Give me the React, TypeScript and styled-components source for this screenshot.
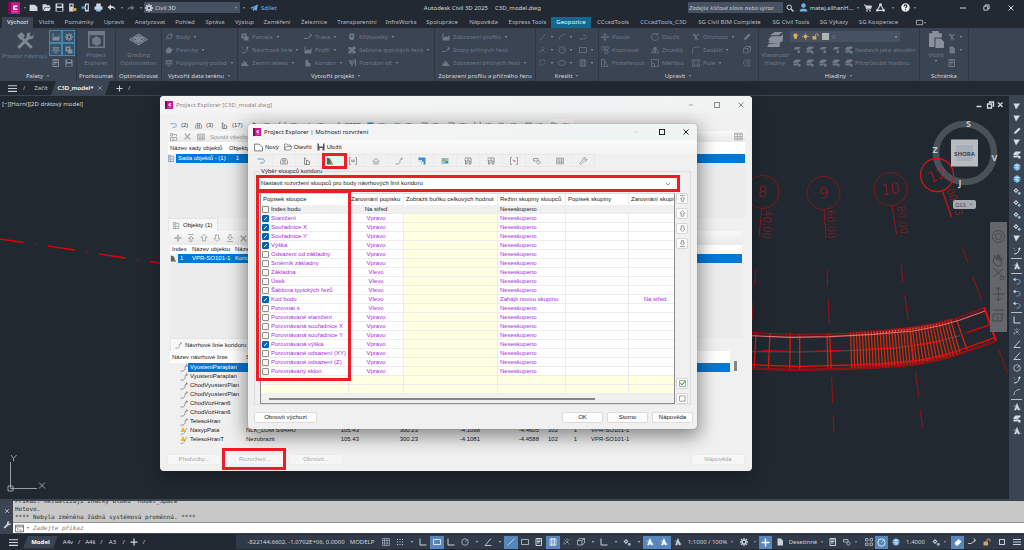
import React from "react";
import styled, { createGlobalStyle } from "styled-components";

const UI = `"Noto Sans", "Open Sans", sans-serif`;
const DLG = `"Liberation Sans", Arial, sans-serif`;
const MONO = `"DejaVu Sans Mono", "Liberation Mono", monospace`;

const Global = createGlobalStyle`
  *, *::before, *::after { box-sizing: border-box; }
  body { margin: 0; background: #222933; }
  button, input, select { font: inherit; color: inherit; border: 0; background: none; padding: 0; margin: 0; min-width: 0; border-radius: 0; }
`;

/* ---------- icons ---------- */

const SHAPES: Record<string, React.ReactNode> = {
  caret: <path d="M3 5h10l-5 6z" fill="currentColor" />,
  newdoc: <path d="M1 3h9l5 4v7H1z" fill="currentColor" />,
  open: <path d="M1 2h6l2 2h5v3H5l-3 6H1zM5.500 8H16l-3 6H2.500z" fill="currentColor" />,
  save: <path d="M1 1h13l1 1v13H1zM4 2v4h8V2zM3 9v5h10V9z" fill="currentColor" fillRule="evenodd" />,
  saveas: <><path d="M2 1h8v14H2zM4 3v3h4V3z" fill="currentColor" fillRule="evenodd" /><path d="M8 9h7v5H8z" fill="#d9a441" /></>,
  mobile: <><path d="M7 1h7v14H7zM9 3v9h3V3z" fill="currentColor" fillRule="evenodd" /><path d="M1 6h4V4l4 4-4 4v-2H1z" fill="#5aa7e0" /></>,
  print: <><path d="M4 1h8v5H4zM1 6h14v6H1z" fill="currentColor" /><path d="M4 10h8v5H4z" fill="#8fc4ee" /></>,
  undo: <path d="M7 2v3.500c5 0 8 2 8 7-2-3-4-3.500-8-3.500V13L1 7.500z" fill="currentColor" />,
  redo: <path d="M9 2v3.500c-5 0-8 2-8 7 2-3 4-3.500 8-3.500V13l6-5.500z" fill="currentColor" />,
  gear: <><circle cx="8" cy="8" r="4" fill="none" stroke="currentColor" strokeWidth="3" /><path d="M8 0v3M8 13v3M0 8h3M13 8h3M2.300 2.300l2.200 2.200M11.500 11.500l2.200 2.200M2.300 13.700l2.200-2.200M11.500 4.500l2.200-2.200" stroke="currentColor" strokeWidth="2.600" /></>,
  plane: <path d="M0 8L16 1l-3 13-4.500-3L6 15l-.5-5L13 4 4 9.500z" fill="currentColor" />,
  search: <><circle cx="6.500" cy="6.500" r="4.500" fill="none" stroke="currentColor" strokeWidth="2" /><path d="M10 10l5 5" stroke="currentColor" strokeWidth="2.500" /></>,
  person: <><circle cx="8" cy="4.500" r="4" fill="currentColor" /><path d="M1 15c0-4 3-5 7-5s7 1 7 5z" fill="currentColor" /></>,
  cart: <><path d="M0 2h3l2 8h8l2-6H4" fill="none" stroke="currentColor" strokeWidth="2" /><path d="M4 4h11l-2 5H5z" fill="currentColor" /><circle cx="6" cy="13.500" r="1.700" fill="currentColor" /><circle cx="12" cy="13.500" r="1.700" fill="currentColor" /></>,
  adesk: <><path d="M2 13L8 3l6 10M2 13h12" fill="none" stroke="currentColor" strokeWidth="2" /><circle cx="8" cy="3" r="2.500" fill="currentColor" /><circle cx="2.500" cy="13" r="2.500" fill="currentColor" /><circle cx="13.500" cy="13" r="2.500" fill="currentColor" /></>,
  help: <><circle cx="8" cy="8" r="7.500" fill="#f0f0f0" /><path d="M5.500 6c0-3.500 5-3.500 5-.5 0 2-2.500 2-2.500 4M8 11v2" fill="none" stroke="#222933" strokeWidth="2" /></>,
  min: <path d="M2 8h12" stroke="currentColor" strokeWidth="2" />,
  max: <rect x="3" y="3" width="10" height="10" fill="none" stroke="currentColor" strokeWidth="2" />,
  restore: <path d="M2 5h9v9H2zM5 5V2h9v9h-3" fill="none" stroke="currentColor" strokeWidth="2" />,
  close: <path d="M3 3l10 10M13 3L3 13" stroke="currentColor" strokeWidth="2" />,
  burger: <path d="M0 3h16M0 8h16M0 13h16" stroke="currentColor" strokeWidth="2" />,
  plus: <path d="M8 1v14M1 8h14" stroke="currentColor" strokeWidth="2.500" />,
  plusfat: <path d="M8 1v14M1 8h14" stroke="currentColor" strokeWidth="4" />,
  tools: <><path d="M2 15L11 6M14 15L5 6" stroke="currentColor" strokeWidth="2.600" /><path d="M1 4l4-3 3 3-4 4zM10 2l3-1-1 3 2 1 2-2c0 4-3 5-5 4S9 4 10 2z" fill="currentColor" /></>,
  explorer: <path d="M0 0h16v16H0zM1.500 4v10.500h13V4zM8 5l4 2v5l-4 2-4-2V7z" fill="currentColor" fillRule="evenodd" />,
  grading: <><path d="M0 8l8-5 8 5-8 5z" fill="none" stroke="currentColor" strokeWidth="1" /><path d="M3 8l5-3 5 3-5 3zM4 5.500l8 5M12 5.500l-8 5" fill="none" stroke="currentColor" strokeWidth="1.200" /><circle cx="8" cy="8" r="2.500" fill="currentColor" /></>,
  point: <><path d="M8 3l6-1-1 6-4 4-5-5z" fill="none" stroke="currentColor" strokeWidth="2" /><path d="M1 14l5-3-3-2z" fill="currentColor" /></>,
  surface: <path d="M5 4l5-2 1 3 4 1-3 8-8 1-3-5z" fill="currentColor" />,
  scale: <path d="M1 3h14M8 2v12M5 14h6M4 4l-3 6h5zM12 4l-3 6h6z" fill="none" stroke="currentColor" strokeWidth="1.500" />,
  parcel: <path d="M1 1h10v6h4v8H6v-4H1zM4 4v3h4V4z" fill="currentColor" fillRule="evenodd" />,
  fline: <path d="M2 14c6 0 9-3 11-10M13 1v4M10 4l5-1M2 2v1M4 6v1" fill="none" stroke="currentColor" strokeWidth="2" />,
  earth: <path d="M1 14V7l4 3V2l4 5 2-3v6l4 2v2z" fill="currentColor" />,
  align: <path d="M0 11h6c5 0 5-7 9-7M15 4l-4-3M15 4l-3 4" fill="none" stroke="currentColor" strokeWidth="1.800" />,
  profile: <path d="M1 1h2v9l5-4 3 3 4-6v12H1z" fill="currentColor" />,
  corridor: <path d="M3 15V3l5-2v5l5 3v6z" fill="currentColor" />,
  cross: <path d="M3 1h8l2 4-2 9H6l-4-3z M5 5v3h4V5z" fill="currentColor" fillRule="evenodd" />,
  assembly: <path d="M1 2h6v3h2V1h6v6h-3v3h3v5H9v-4H7v4H1V9h3V7H1z" fill="currentColor" />,
  pipe: <path d="M1 4h7v10M5 4v6M10 2h5v12M12 5v4" fill="none" stroke="currentColor" strokeWidth="2.400" />,
  line: <path d="M1 15L15 1" stroke="currentColor" strokeWidth="1.200" />,
  arc: <path d="M2 14C2 7 7 3 14 3" fill="none" stroke="currentColor" strokeWidth="1.400" />,
  poly: <path d="M1 12h9c6 0 6-8 0-8H8" fill="none" stroke="currentColor" strokeWidth="1.400" />,
  star: <path d="M3 3l10 10M13 3L3 13M8 1v4M1 10h4" stroke="currentColor" strokeWidth="1.400" strokeDasharray="3 1" />,
  circ: <><circle cx="8" cy="8" r="6.500" fill="none" stroke="currentColor" strokeWidth="1.400" /><path d="M8 8l4-4" stroke="currentColor" strokeWidth="1.200" /></>,
  rect: <path d="M1 3h14v10H1z" fill="none" stroke="currentColor" strokeWidth="1.500" />,
  curve: <path d="M2 2h10c0 8-3 11-10 12z" fill="none" stroke="currentColor" strokeWidth="1.200" strokeDasharray="4 1.500" />,
  ellipse: <ellipse cx="8" cy="8" rx="7" ry="5" fill="none" stroke="currentColor" strokeWidth="1.400" />,
  hatch: <path d="M2 2h12v12H2zM5 0v16M8 0v16M11 0v16" fill="none" stroke="currentColor" strokeWidth="1.300" />,
  move: <path d="M8 1v14M1 8h14M5.500 3.500L8 1l2.500 2.500M5.500 12.500L8 15l2.500-2.500M3.500 5.500L1 8l2.500 2.500M12.500 5.500L15 8l-2.500 2.500" fill="none" stroke="currentColor" strokeWidth="1.800" />,
  copy: <><circle cx="4.500" cy="4.500" r="3.500" fill="none" stroke="currentColor" strokeWidth="1.500" /><circle cx="11.500" cy="4.500" r="3.500" fill="none" stroke="currentColor" strokeWidth="1.500" /><circle cx="11" cy="12" r="3.500" fill="none" stroke="currentColor" strokeWidth="1.500" /></>,
  stretch: <path d="M1 15V1h6v14zM7 3l7 12H7" fill="none" stroke="currentColor" strokeWidth="1.400" />,
  rotate: <path d="M13 3a7 7 0 1 0 2 6M13 0v4H9" fill="none" stroke="currentColor" strokeWidth="1.500" />,
  mirror: <path d="M7 2v12H1zM9 2v12h6z" fill="none" stroke="currentColor" strokeWidth="1.500" />,
  scaleup: <path d="M1 1h14v14H1zM1 9h6v6" fill="none" stroke="currentColor" strokeWidth="1.400" />,
  trim: <path d="M1 3l6 3 7-4M7 6l1 9M4 1l8 13" fill="none" stroke="currentColor" strokeWidth="2" />,
  fillet: <path d="M1 15V9c0-5 3-7 8-7h6" fill="none" stroke="currentColor" strokeWidth="1.400" />,
  array: <path d="M1 1h5v5H1zM10 1h5v5h-5zM1 10h5v5H1zM10 10h5v5h-5z" fill="none" stroke="currentColor" strokeWidth="1.400" />,
  pencil: <path d="M2 14l1-4 9-9 3 3-9 9z" fill="currentColor" />,
  box: <path d="M1 5h9v9H1zM1 5l4-4h10v9l-5 4M10 5l5-4" fill="none" stroke="currentColor" strokeWidth="1.400" />,
  offset: <path d="M15 2H7c-8 0-8 12 0 12h8M15 6H9c-4 0-4 4 0 4h6" fill="none" stroke="currentColor" strokeWidth="1.300" />,
  layers: <path d="M3 4l4-3h8l-4 3zM2 7l2-2h9l2-2v3l-4 3H1zM1 11l2-2h8l4-3v3l-4 3zM0 15l2-3h7l3-2v5z" fill="currentColor" />,
  layer: <path d="M1 7l4-5h10l-3 5zM9 9h5v5H9z" fill="currentColor" />,
  stack: <path d="M1 5l4-4h10v3L8 8H1zM1 9h7l3-2v3l-3 3H1zM10 10h5v5h-5z" fill="currentColor" />,
  bulb: <path d="M8 1c6 0 6 6 3 8v4H5V9C2 7 2 1 8 1z" fill="#d9b35a" />,
  sun: <><circle cx="8" cy="8" r="4.500" fill="#cfa75a" /><path d="M8 0v3M8 13v3M0 8h3M13 8h3" stroke="#cfa75a" strokeWidth="1.500" /></>,
  lock: <><path d="M1 7h9v8H1z" fill="#cfa75a" /><path d="M8 7V4c0-3 6-3 6 0v3" fill="none" stroke="#cfa75a" strokeWidth="2" /></>,
  paste: <path d="M1 2h3V0h6v2h3v4H6v9H1zM7 7h5l3 3v6H7z" fill="currentColor" />,
  doc: <path d="M3 1h7l4 4v10H3z" fill="currentColor" />,
  list: <path d="M2 1h11v14H2zM4 4h7M4 7h7M4 10h5" fill="none" stroke="currentColor" strokeWidth="2" />,
  returnarr: <path d="M1 4h10c5 0 5 8 0 8H6" fill="none" stroke="#6d9ec4" strokeWidth="2" />,
  car: <path d="M1 14V8l3-5h8l3 5v6zM4 8h8M6 3v11M10 3v11" fill="none" stroke="currentColor" strokeWidth="1.500" />,
  post: <path d="M3 1v14h10V9L7 6v9M3 3h3" fill="none" stroke="currentColor" strokeWidth="2" />,
  corr: <><path d="M2 1l6 2 6 12H2z" fill="#56655f" /><path d="M9 5l5 10H9z" fill="#b39a4a" /></>,
  brackets: <path d="M4 1H1v14h3M12 1h3v14h-3M4 8h8M6 5v6M10 5v6" fill="none" stroke="currentColor" strokeWidth="1.500" />,
  house: <path d="M1 9l7-6 7 6M4 8v6h8V8M6 10h4" fill="none" stroke="currentColor" strokeWidth="1.500" />,
  featline: <path d="M1 14c8 1 9-3 9-6s1-5 4-5M12 1l3 2-2 3" fill="none" stroke="currentColor" strokeWidth="1.500" />,
  bluesurf: <><path d="M1 1h14v14h-4V9H8V6H1z" fill="#3b8fd0" /><path d="M1 8h6v7" fill="none" stroke="#9cc4e4" strokeWidth="1.500" /></>,
  colormap: <><path d="M1 2h14v12H1z" fill="#8fc4c0" /><path d="M3 4h5v4H3z" fill="#d98b5a" /><path d="M9 8h5v4H9z" fill="#3b8fd0" /></>,
  pipes: <path d="M1 2h13v12h-4V6H6v8H3V6H1M10 9h4" fill="none" stroke="currentColor" strokeWidth="1.800" />,
  redbr: <><path d="M4 1H1v14h3M12 1h3v14h-3" fill="none" stroke="currentColor" strokeWidth="1.500" /><path d="M5 6l5 3M10 6v4" stroke="#cc5555" strokeWidth="1.500" /></>,
  shape: <path d="M1 3h9v5H1zM9 9a3 3 0 1 0 5 2 3 3 0 0 0-4-3" fill="none" stroke="currentColor" strokeWidth="1.500" />,
  tablei: <path d="M1 2h14v12H1zM1 4h14M1 8h14M1 11h14M6 4v10M11 4v10" fill="none" stroke="currentColor" strokeWidth="1.200" />,
  console: <path d="M1 2h14v12H1zM1 5h14M4 8l2 1.500L4 11M8 11h4" fill="none" stroke="currentColor" strokeWidth="1.400" />,
  wrench: <path d="M1 13l7-7c-1-4 2-6 5-5l-2 3 2 2 3-2c0 4-3 5-5 4l-7 7z" fill="none" stroke="currentColor" strokeWidth="1.400" />,
  wrenchf: <path d="M1 13l7-7c-1-4 2-6 5-5l-2 3 2 2 3-2c0 4-3 5-5 4l-7 7z" fill="currentColor" />,
  top: <path d="M2 1h12M6 15V9H3l5-5 5 5h-3v6z" fill="none" stroke="currentColor" strokeWidth="1.500" />,
  up: <path d="M8 1l6 6h-3v7H5V7H2z" fill="none" stroke="currentColor" strokeWidth="1.500" />,
  down: <path d="M8 15l6-6h-3V2H5v7H2z" fill="none" stroke="currentColor" strokeWidth="1.500" />,
  bottom: <path d="M2 15h12M6 1h4v6h3l-5 5-5-5h3z" fill="none" stroke="currentColor" strokeWidth="1.500" />,
  checked: <><path d="M1 1h14v14H1z" fill="none" stroke="#777" strokeWidth="1.500" /><path d="M3 7l4 4 7-8" fill="none" stroke="#3aa655" strokeWidth="2.500" /></>,
  unchecked: <path d="M1 2h13v12H1z" fill="none" stroke="#777" strokeWidth="1.500" />,
  folder: <path d="M1 14V2h5l2 2h5v3M1 14l3-7h12l-3 7z" fill="none" stroke="#666" strokeWidth="1.300" />,
  page: <path d="M1 2h8l6 5v7H1z" fill="#fff" stroke="#666" strokeWidth="1.500" />,
  floppy: <path d="M1 1h14v14H1zM4 1v6h8V1zM5 10v5h6v-5z" fill="#555" fillRule="evenodd" />,
  warn: <><path d="M6 0l5 10H1z" fill="#f0b429" /><path d="M1 15c10 0 9-8 13-13" fill="none" stroke="#888" strokeWidth="1.500" /></>,
  treei: <path d="M1 1h4v5H1zM5 3h8v4M1 9h12v6H1zM6 9v6" fill="none" stroke="currentColor" strokeWidth="1.500" />,
  target: <><path d="M6 2l5 5-5 5-5-5zM6 5l2 2-2 2-2-2z" fill="currentColor" fillRule="evenodd" /><circle cx="12.500" cy="12.500" r="3" fill="#8fb2cf" /></>,
  person2: <path d="M8 1l5 13h-3L8 9l-2 5H3zM1 7l5-2M12 9l3 4" fill="currentColor" stroke="currentColor" strokeWidth="1" />,
  globe: <><circle cx="8" cy="8" r="7" fill="#5fa5da" /><path d="M3 5h10M3 9l9 1M8 1v14" stroke="#e3edf5" strokeWidth="1.500" /></>,
  grid: <path d="M1 1v14M5 1v14M10 1v14M15 1v14M1 1h14M1 5h14M1 10h14M1 15h14" stroke="currentColor" strokeWidth="1" />,
  dots: <path d="M2 3h12M2 8h12M2 13h12" stroke="currentColor" strokeWidth="2" strokeDasharray="2 3" />,
  angle: <path d="M2 1v13h13" fill="none" stroke="currentColor" strokeWidth="2" />,
  slash: <path d="M2 15L14 1M2 15h13" fill="none" stroke="currentColor" strokeWidth="1.800" />,
  peg: <path d="M1 1h13L6 13z" fill="currentColor" />,
  hookr: <><path d="M3 5h6c7 0 7 9 0 9H7" fill="none" stroke="#6fa3cd" strokeWidth="2" /><path d="M5 1v8L0 5z" fill="#cdd7e0" /></>,
  eraser: <path d="M1 10l8-8 6 5-7 8H4z" fill="currentColor" />,
};

const Svg = styled.svg<{ $c?: string }>`
  display: block;
  flex: none;
  overflow: visible;
  color: ${(p) => p.$c ?? "inherit"};
`;

const Icon = ({ n, s = 8, c }: { n: string; s?: number; c?: string }) => (
  <Svg width={s} height={s} viewBox="0 0 16 16" $c={c} aria-hidden>
    {SHAPES[n]}
  </Svg>
);

const Logo = ({ s = 8 }: { s?: number }) => (
  <Svg width={s} height={s} viewBox="0 0 16 16" aria-hidden>
    <rect width="16" height="16" rx="1" fill="#c4168f" />
    <path d="M0 0h4v16H0z" fill="#7d0a5c" />
    <path d="M12.500 5.500H8v4h4.500" fill="none" stroke="#fff" strokeWidth="2" />
    <path d="M5 13h8" stroke="#e884cc" strokeWidth="1" />
  </Svg>
);

/* ---------- application frame ---------- */

const Page = styled.div`
  min-height: 100vh;
  display: flex;
  flex-direction: column;
  overflow: hidden;
  background: #222933;
  color: #d3d7dc;
  font: 6px/8px ${UI};
  white-space: nowrap;
`;

const TitleBar = styled.header`
  display: flex;
  align-items: center;
  height: 17px;
  padding: 0 0 2px 6px;
`;

const Slot = styled.span<{ $w: number }>`
  width: ${(p) => p.$w}px;
  flex: none;
  display: flex;
  align-items: center;
  justify-content: center;
`;

const IconButton = styled.button<{ $w: number; $c?: string }>`
  width: ${(p) => p.$w}px;
  height: 12px;
  flex: none;
  display: flex;
  align-items: center;
  justify-content: center;
  color: ${(p) => p.$c ?? "inherit"};
`;

const DropBox = styled.label<{ $w: number }>`
  width: ${(p) => p.$w}px;
  height: 11px;
  flex: none;
  display: flex;
  align-items: center;
  gap: 2px;
  padding: 0 2px 0 1px;
  background: #465163;
  select { flex: 1; appearance: none; line-height: 8px; }
`;

const AppTitle = styled.h1`
  flex: 1;
  display: flex;
  justify-content: center;
  gap: 7px;
  margin: 0;
  font: inherit;
  overflow: hidden;
`;

const SearchInput = styled.input`
  width: 95px;
  height: 11px;
  padding: 0 1px;
  background: #465163;
  font: italic 6px/8px ${UI};
  &::placeholder { color: #c3c8cf; opacity: 1; }
`;

const Share = styled.a`
  color: #7fb8e6;
  text-decoration: none;
`;

const RibbonTabs = styled.nav`
  display: flex;
  height: 11px;
  padding-left: 2px;
`;

const RibbonTab = styled.button<{ $w: number; $kind?: string }>`
  width: ${(p) => p.$w}px;
  flex: none;
  line-height: 11px;
  text-align: center;
  color: ${(p) => (p.$kind ? "#f2f4f6" : "#b4b9c0")};
  background: ${(p) => (p.$kind === "geo" ? "#12698f" : p.$kind === "active" ? "#3b4453" : "none")};
`;

const Ribbon = styled.section`
  display: flex;
  height: 53px;
  background: #3b4453;
`;

const Panel = styled.div<{ $w: number }>`
  width: ${(p) => p.$w}px;
  flex: none;
  display: flex;
  flex-direction: column;
  border-right: 1px solid #2e3643;
`;

const PanelBody = styled.div<{ $pad?: number }>`
  flex: 1;
  display: flex;
  align-items: flex-start;
  padding: 2px 0 0 ${(p) => p.$pad ?? 0}px;
  color: #707987;
`;

const PanelLabel = styled.div`
  height: 10px;
  display: flex;
  align-items: center;
  justify-content: center;
  gap: 3px;
  line-height: 10px;
  color: #d3d7dc;
`;

const BigButton = styled.button<{ $w: number }>`
  width: ${(p) => p.$w}px;
  flex: none;
  display: flex;
  flex-direction: column;
  align-items: center;
  padding-top: 1px;
  line-height: 8px;
  svg:first-child { margin-bottom: 3px; }
`;

const Column = styled.div<{ $w: number }>`
  width: ${(p) => p.$w}px;
  flex: none;
  display: flex;
  flex-direction: column;
`;

const Tool = styled.button`
  height: 13px;
  display: flex;
  align-items: center;
  gap: 3px;
`;

const Caret = () => <Icon n="caret" s={4} c="#a3a9b2" />;

const ToggleGrid = styled.div`
  display: grid;
  grid-template-columns: 13px 13px;
  grid-auto-rows: 13px;
`;

const Toggle = styled.button<{ $on?: boolean }>`
  display: flex;
  align-items: center;
  justify-content: center;
  color: #858d98;
  border: 1px solid ${(p) => (p.$on ? "#4885ac" : "transparent")};
  background: ${(p) => (p.$on ? "#34536b" : "none")};
`;

const LayerRow = styled.div`
  display: flex;
  align-items: center;
  height: 13px;
`;

const LayerSelect = styled.label`
  width: 110px;
  height: 11px;
  margin: 1px 0;
  display: flex;
  align-items: center;
  gap: 3px;
  padding: 0 2px;
  background: #465163;
  select { flex: 1; appearance: none; line-height: 8px; }
`;

const Swatch = styled.span`
  width: 7px;
  height: 7px;
  background: #aeb3ba;
`;

const FileTabs = styled.nav`
  display: flex;
  align-items: center;
  height: 15px;
  padding-left: 8px;
  border-bottom: 1px solid #3b4453;
  color: #c6cad0;
`;

const FileTab = styled.button<{ $w: number }>`
  width: ${(p) => p.$w}px;
  line-height: 14px;
`;

const ActiveFile = styled.button`
  width: 59px;
  height: 14px;
  display: flex;
  align-items: center;
  justify-content: center;
  gap: 4px;
  font-weight: 600;
  color: #fff;
  background: #3b4453;
  clip-path: polygon(5px 0, 100% 0, calc(100% - 5px) 100%, 0 100%);
`;

/* ---------- drawing area ---------- */

const Workspace = styled.main`
  flex: 1;
  min-height: 403px;
  display: flex;
  position: relative;
`;

const Canvas = styled.div`
  flex: 1;
  overflow: hidden;
  background: #212830;
  svg.drawing { display: block; }
`;

const SideBar = styled.aside`
  width: 15px;
  flex: none;
  display: flex;
  flex-direction: column;
  align-items: center;
  padding-top: 5px;
  background: #3b4453;
  color: #d3dbe4;
`;

const SideButton = styled.button`
  height: 12px;
  display: flex;
  align-items: center;
`;

const SideRule = styled.hr`
  width: 11px;
  height: 1px;
  margin: 1px 0;
  border: 0;
  background: #b8bec6;
`;

/* ---------- command line and status ---------- */

const CommandPanel = styled.section`
  display: flex;
  height: 35px;
  padding-top: 2px;
  background: #3b4453;
  font: 6px/8px ${MONO};
`;

const CommandTools = styled.div`
  width: 13px;
  flex: none;
  display: flex;
  flex-direction: column;
  align-items: center;
  justify-content: space-around;
  padding: 4px 0 2px;
`;

const CommandMain = styled.div`
  flex: 1;
  display: flex;
  flex-direction: column;
`;

const CommandLog = styled.div`
  height: 22px;
  display: flex;
  flex-direction: column;
  justify-content: flex-end;
  overflow: hidden;
  padding: 0 0 1px 2px;
  background: #c8c8c8;
  border-bottom: 1px solid #8d929a;
  color: #303030;
`;

const CommandInput = styled.label`
  height: 10px;
  display: flex;
  align-items: center;
  gap: 2px;
  padding-left: 2px;
  background: #fff;
  color: #555;
  input { flex: 1; font-style: italic; padding-left: 1px; }
  input::placeholder { color: #777; opacity: 1; }
`;

const StatusBar = styled.footer`
  display: flex;
  align-items: center;
  height: 16px;
  background: #222933;
  padding-left: 7px;
  justify-content: space-between;
`;

const Group = styled.div`
  display: flex;
  align-items: center;
`;

const StatusRight = styled(Group)`
  flex: none;
  height: 14px;
  padding-left: 11px;
  background: #313a48;
`;

const ModelTab = styled.button`
  width: 35px;
  height: 13px;
  font-weight: 700;
  color: #fff;
  background: #3b4453;
  clip-path: polygon(5px 0, 100% 0, calc(100% - 5px) 100%, 0 100%);
`;

const StatusItem = styled.button<{ $w: number; $on?: boolean }>`
  width: ${(p) => p.$w}px;
  height: 13px;
  flex: none;
  display: flex;
  align-items: center;
  justify-content: center;
  gap: 3px;
  color: ${(p) => (p.$on ? "#fff" : "#cdd2d8")};
  background: ${(p) => (p.$on ? "#5686bb" : "none")};
`;

/* ---------- dialogs ---------- */

const Dialog = styled.section<{ $x: number; $y: number; $w: number; $h: number; $front?: boolean }>`
  position: absolute;
  left: ${(p) => p.$x}px;
  top: ${(p) => p.$y}px;
  width: ${(p) => p.$w}px;
  height: ${(p) => p.$h}px;
  display: flex;
  flex-direction: column;
  border-radius: 4px;
  background: #f0f0f0;
  color: #222;
  font: 6px/8px ${DLG};
  box-shadow: ${(p) => (p.$front ? "0 5px 18px 3px rgba(0,0,0,.42), 0 0 1px #777" : "0 6px 18px rgba(0,0,0,.3)")};
`;

const DialogTitle = styled.header<{ $h: number; $dim?: boolean }>`
  display: flex;
  align-items: center;
  height: ${(p) => p.$h}px;
  flex: none;
  padding-left: 5px;
  gap: 3px;
  border-radius: 4px 4px 0 0;
  background: linear-gradient(90deg, #f5f3f5, #eff4f3);
  font-family: ${UI};
  color: ${(p) => (p.$dim ? "#8b8b8b" : "#222")};
  h2 { flex: 1; margin: 0; font: inherit; }
`;

const Highlight = styled.div<{ $x: number; $y: number; $w: number; $h: number }>`
  position: absolute;
  left: ${(p) => p.$x}px;
  top: ${(p) => p.$y}px;
  width: ${(p) => p.$w}px;
  height: ${(p) => p.$h}px;
  border: 3px solid #ee1c25;
  pointer-events: none;
`;

const PushButton = styled.button<{ $w: number }>`
  width: ${(p) => p.$w}px;
  height: 11px;
  flex: none;
  background: #fdfdfd;
  border: 1px solid #dcdcdc;
  border-radius: 2px;
  line-height: 9px;
  &:disabled { color: #a9a9a9; background: #f6f6f6; border-color: #ededed; }
`;

const OuterBody = styled.div`
  flex: 1;
  display: flex;
  flex-direction: column;
  padding: 6px 7px 0 8px;
`;

const CountTabs = styled.div`
  display: flex;
  height: 12px;
  flex: none;
  padding-left: 1px;
  color: #444;
`;

const CountTab = styled.button<{ $w: number; $on?: boolean }>`
  width: ${(p) => p.$w}px;
  flex: none;
  display: flex;
  align-items: center;
  gap: 4px;
  padding-left: 1px;
  background: ${(p) => (p.$on ? "#fafafa" : "none")};
`;

const Strip = styled.div<{ $h: number; $pad?: number }>`
  height: ${(p) => p.$h}px;
  flex: none;
  display: flex;
  align-items: center;
  gap: 5px;
  padding: 0 2px 0 ${(p) => p.$pad ?? 2}px;
  background: linear-gradient(#f9f9f9, #eaeaea);
  color: #999;
`;

const Push = styled.span`
  margin-left: auto;
`;

const Sheet = styled.table`
  width: 100%;
  flex: none;
  table-layout: fixed;
  border-collapse: collapse;
  th, td { padding: 0 0 0 2px; text-align: left; font-weight: 400; line-height: 9px; overflow: hidden; }
  thead { background: #fff; }
`;

const SheetRow = styled.tr<{ $sel?: boolean; $h: number }>`
  height: ${(p) => p.$h}px;
  color: ${(p) => (p.$sel ? "#fff" : "inherit")};
  td:nth-child(n + 2) { background: ${(p) => (p.$sel ? "#0078d7" : "none")}; }
  td.num { text-align: right; }
  td.object { padding-left: 14px; }
  td:first-child { padding: 0; }
`;

const Blank = styled.div<{ $h: number }>`
  height: ${(p) => p.$h}px;
  flex: none;
  background: #ececec;
`;

const PageTab = styled.button<{ $w: number; $h: number }>`
  width: ${(p) => p.$w}px;
  height: ${(p) => p.$h}px;
  flex: none;
  display: flex;
  align-items: center;
  gap: 3px;
  padding-left: 4px;
  background: #f8f8f8;
  border: 1px solid #e4e4e4;
  border-bottom: 0;
`;

const Inset = styled.div<{ $l?: number; $r: number }>`
  display: flex;
  flex-direction: column;
  margin-left: ${(p) => p.$l ?? 0}px;
  margin-right: ${(p) => p.$r}px;
`;

const ListRow = styled.div`
  display: flex;
  ${Sheet} { flex: 1 1 0; width: 0; }
`;

const ScrollThumb = styled.span`
  width: 3px;
  height: 10px;
  margin: 10px 5px 0 4px;
  flex: none;
  background: #858585;
`;

const Footer = styled.footer<{ $pad: string }>`
  display: flex;
  align-items: center;
  gap: 4px;
  flex: none;
  padding: ${(p) => p.$pad};
`;

const Toolbar = styled.div`
  height: 15px;
  display: flex;
  align-items: center;
  gap: 5px;
  padding-left: 6px;
  background: linear-gradient(#fbfbfb, #f2f2f2);
`;

const ToolText = styled.button`
  display: flex;
  align-items: center;
  gap: 2px;
`;

const TypeTabs = styled.div`
  display: flex;
  height: 13px;
  padding-left: 2px;
  color: #8a8a8a;
`;

const TypeTab = styled.button`
  flex: 0 0 23px;
  display: flex;
  align-items: center;
  justify-content: center;
  border: 1px solid #e9e9e9;
  border-left: 0;
`;

const Fieldset = styled.fieldset`
  flex: 1;
  margin: 0 6px 0 6px;
  min-width: 0;
  border: 1px solid #dedede;
  padding: 3px 2px 0 5px;
  legend { padding: 0 1px; margin-left: 0; line-height: 8px; }
`;

const Combo = styled.label`
  display: flex;
  align-items: center;
  width: 415px;
  height: 11px;
  padding: 0 4px 0 1px;
  background: #fff;
  select { flex: 1; appearance: none; line-height: 9px; }
`;

const GridArea = styled.div`
  display: flex;
  justify-content: space-between;
  margin-top: 4px;
`;

const GridBox = styled.div`
  width: 415px;
  height: 211px;
  border: 1px solid #8c8c8c;
  border-top-color: #ddd;
  overflow: hidden;
  background: #f0f0f0;
`;

const Grid = styled.table`
  width: 421px;
  table-layout: fixed;
  border-collapse: separate;
  border-spacing: 0;
  th, td { height: 9px; padding: 0 0 0 2px; line-height: 8px; text-align: left; font-weight: 400; border-right: 1px solid #ececec; border-bottom: 1px solid #ececec; overflow: hidden; }
  th { height: 11px; background: #fff; border-bottom-color: #fff; color: #222; }
  td { background: #fff; }
  td:first-child { padding: 0; background: linear-gradient(90deg, #ffffe1 9px, #fff 9px); }
  td:nth-child(2) { text-align: center; padding: 0; }
  td:nth-child(3) { background: #ffffe1; }
  td:nth-child(6) { text-align: center; padding: 0; }
`;

const GridRow = styled.tr<{ $fixed?: boolean; $empty?: boolean }>`
  color: #a52be0;
  ${(p) => p.$fixed && "color: #222; && td { background: #f0f0f0; }"}
  ${(p) => p.$empty && "&& td { background: #ffffe1; }"}
`;

const CheckLabel = styled.label`
  display: flex;
  align-items: center;
  gap: 2px;
  height: 8px;
  padding-left: 1px;
`;

const Check = styled.input`
  appearance: none;
  width: 7px;
  height: 7px;
  flex: none;
  background: #f7f7f2;
  border: 1px solid #8f8f8f;
  border-radius: 1px;
  &:checked {
    border-color: #0060b4;
    background: #0067c0 linear-gradient(135deg, transparent 45%, #fff 45%, #fff 60%, transparent 60%) center / 3px 3px no-repeat;
  }
`;

const HScroll = styled.div`
  height: 2px;
  width: 326px;
  margin: 4px 0 0 8px;
  background: #868686;
`;

const SideStack = styled.div`
  display: flex;
  flex-direction: column;
  gap: 4px;
`;

const SquareButton = styled.button`
  width: 12px;
  height: 11px;
  display: flex;
  align-items: center;
  justify-content: center;
  background: #fcfcfc;
  border: 1px solid #d5d5d5;
  border-radius: 2px;
  color: #777;
  &:nth-child(5) { margin-top: auto; }
`;

/* ---------- data ---------- */

const RIBBON_TABS: [string, number, string?][] = [
  ["Výchozí", 31, "active"], ["Vložit", 27], ["Poznámky", 38], ["Upravit", 32], ["Analyzovat", 40],
  ["Pohled", 30], ["Správa", 30], ["Výstup", 29], ["Zaměření", 36], ["Železnice", 38],
  ["Transparentní", 48], ["InfraWorks", 40], ["Spolupráce", 42], ["Nápověda", 41], ["Express Tools", 47],
  ["Geopozice", 40, "geo"], ["CCcadTools", 44], ["CCcadTools_C3D", 57], ["SG Civil BIM Complete", 75],
  ["SG Civil Tools", 48], ["SG Výkazy", 38], ["SG Kooperace", 51],
];

const GRID_ROWS: [string, boolean, string, string?, string?][] = [
  ["Index bodu", false, "Na střed"],
  ["Staničení", true, "Vpravo"],
  ["Souřadnice X", true, "Vpravo"],
  ["Souřadnice Y", true, "Vpravo"],
  ["Výška", true, "Vpravo"],
  ["Odsazení od základny", false, "Vpravo"],
  ["Směrník základny", false, "Vpravo"],
  ["Základna", false, "Vlevo"],
  ["Úsek", false, "Vlevo"],
  ["Šablona typických řezů", false, "Vlevo"],
  ["Kód bodu", true, "Vlevo", "Zahájit novou skupinu", "Na střed"],
  ["Porovnat s", false, "Vlevo"],
  ["Porovnávané staničení", false, "Vpravo"],
  ["Porovnávaná souřadnice X", false, "Vpravo"],
  ["Porovnávaná souřadnice Y", false, "Vpravo"],
  ["Porovnávaná výška", true, "Vpravo"],
  ["Porovnávané odsazení (XY)", false, "Vpravo"],
  ["Porovnávané odsazení (Z)", false, "Vpravo"],
  ["Porovnávaný sklon", false, "Vpravo"],
];

const LINES: string[][] = [
  ["VyusteniParaplan"], ["VyusteniParaplan"], ["ChodVyusteniPlan"], ["ChodVyusteniPlan"],
  ["ChodVozHran6"], ["ChodVozHran6"], ["TelesoHran"],
  ["NasypPata", "NLK_LOM SVAHU", "105.43", "300.23", "-4.1098", "-4.4605", "102", "1", "VPR-SO101-1"],
  ["TelesoHranT", "Nezobrazit", "105.43", "300.23", "-4.1081", "-4.4588", "102", "1", "VPR-SO101-1"],
];

const COUNTS: [string, string, number][] = [
  ["returnarr", "(2)", 25], ["car", "(3)", 26], ["post", "(17)", 31], ["corr", "(2)", 27], ["brackets", "(2)", 27],
  ["house", "(2)", 27], ["featline", "(5377)", 34], ["bluesurf", "(0)", 27], ["colormap", "(0)", 27],
  ["pipes", "(0)", 27], ["pipes", "(0)", 26], ["redbr", "(1)", 25], ["shape", "(0)", 26], ["tablei", "(4)", 26], ["treei", "(1)", 24],
];

const TYPES = ["returnarr", "car", "post", "corr", "brackets", "house", "featline", "bluesurf", "colormap", "pipes", "pipes", "redbr", "shape", "tablei", "wrench"];

const MODES = ["grid", "dots", "caret", "angle", "rect", "angle", "circ", "caret", "slash", "caret", "line", "rect", "list", "hatch", "star", "box", "caret", "angle", "caret", "target", "caret", "person2", "person2", "person2"];
const MODES_ON = [4, 10, 13, 21, 22];

/* ---------- sections ---------- */

const ToolItem = ({ i, t, drop }: { i: string; t?: string; drop?: boolean }) => (
  <Tool>
    <Icon n={i} />
    {t}
    {drop && <Caret />}
  </Tool>
);

const RibbonPanels = () => (
  <Ribbon>
    <Panel $w={77}>
      <PanelBody>
        <BigButton $w={49}><Icon n="tools" s={18} c="#7f8792" />Prostor nástrojů</BigButton>
        <ToggleGrid>
          {["profile", "gear", "scale", "parcel", "list", "save"].map((n, i) => (
            <Toggle key={n} $on={i < 4}><Icon n={n} /></Toggle>
          ))}
        </ToggleGrid>
      </PanelBody>
      <PanelLabel>Palety<Caret /></PanelLabel>
    </Panel>
    <Panel $w={39}>
      <PanelBody><BigButton $w={38}><Icon n="explorer" s={17} />Project<br />Explorer</BigButton></PanelBody>
      <PanelLabel>Prozkoumat</PanelLabel>
    </Panel>
    <Panel $w={46}>
      <PanelBody><BigButton $w={45}><Icon n="grading" s={17} c="#7f8792" />Grading<br />Optimization</BigButton></PanelBody>
      <PanelLabel>Optimalizovat</PanelLabel>
    </Panel>
    <Panel $w={76}>
      <PanelBody $pad={3}>
        <Column $w={70}>
          <ToolItem i="point" t="Body" drop />
          <ToolItem i="surface" t="Povrchy" drop />
          <ToolItem i="scale" t="Polygonový pořad" drop />
        </Column>
      </PanelBody>
      <PanelLabel>Vytvořit data terénu<Caret /></PanelLabel>
    </Panel>
    <Panel $w={197}>
      <PanelBody $pad={3}>
        <Column $w={63}>
          <ToolItem i="parcel" t="Parcela" drop />
          <ToolItem i="fline" t="Návrhová linie" drop />
          <ToolItem i="earth" t="Zemní těleso" drop />
        </Column>
        <Column $w={44}>
          <ToolItem i="align" t="Trasa" drop />
          <ToolItem i="profile" t="Profil" drop />
          <ToolItem i="corridor" t="Koridor" drop />
        </Column>
        <Column $w={84}>
          <ToolItem i="cross" t="Křižovatky" drop />
          <ToolItem i="assembly" t="Šablona typických řezů" drop />
          <ToolItem i="pipe" t="Potrubní síť" drop />
        </Column>
      </PanelBody>
      <PanelLabel>Vytvořit projekt<Caret /></PanelLabel>
    </Panel>
    <Panel $w={101}>
      <PanelBody $pad={7}>
        <Column $w={90}>
          <ToolItem i="profile" t="Zobrazení profilu" drop />
          <ToolItem i="align" t="Stopy příčných řezů" />
          <ToolItem i="earth" t="Zobrazení příčných řezů" drop />
        </Column>
      </PanelBody>
      <PanelLabel>Zobrazení profilu a příčného řezu</PanelLabel>
    </Panel>
    <Panel $w={63}>
      <PanelBody $pad={3}>
        <Column $w={19}><ToolItem i="line" drop /><ToolItem i="star" drop /><ToolItem i="curve" drop /></Column>
        <Column $w={21}><ToolItem i="arc" drop /><ToolItem i="circ" drop /><ToolItem i="ellipse" drop /></Column>
        <Column $w={19}><ToolItem i="poly" /><ToolItem i="rect" drop /><ToolItem i="hatch" drop /></Column>
      </PanelBody>
      <PanelLabel>Kreslit<Caret /></PanelLabel>
    </Panel>
    <Panel $w={160}>
      <PanelBody $pad={2}>
        <Column $w={50}><ToolItem i="move" t="Posun" /><ToolItem i="copy" t="Kopírovat" /><ToolItem i="stretch" t="Protáhnout" /></Column>
        <Column $w={41}><ToolItem i="rotate" t="Otočit" /><ToolItem i="mirror" t="Zrcadlit" /><ToolItem i="scaleup" t="Měřítko" /></Column>
        <Column $w={51}><ToolItem i="trim" t="Oříznout" drop /><ToolItem i="fillet" t="Zaoblit" drop /><ToolItem i="array" t="Pole" drop /></Column>
        <Column $w={10}><ToolItem i="pencil" /><ToolItem i="box" /><ToolItem i="offset" /></Column>
      </PanelBody>
      <PanelLabel>Upravit<Caret /></PanelLabel>
    </Panel>
    <Panel $w={161}>
      <PanelBody $pad={1}>
        <BigButton $w={30}><Icon n="layers" s={17} c="#8a919b" />Vlastnosti<br />hladiny</BigButton>
        <div>
          <LayerSelect>
            <Icon n="bulb" s={7} /><Icon n="sun" s={7} /><Icon n="lock" s={7} /><Swatch />
            <select aria-label="Hladina"><option>0</option></select>
            <Caret />
          </LayerSelect>
          {["Nastavit jako aktuální", "Přizpůsobit hladinu"].map((t, r) => (
            <LayerRow key={t}>
              {[0, 1, 2, 3, 4].map((k) => (
                <Slot $w={13} key={k}><Icon n={r || k % 3 === 1 ? "stack" : "layer"} /></Slot>
              ))}
              {t}
            </LayerRow>
          ))}
        </div>
      </PanelBody>
      <PanelLabel>Hladiny<Caret /></PanelLabel>
    </Panel>
    <Panel $w={49}>
      <PanelBody $pad={4}>
        <BigButton $w={24}><Icon n="paste" s={17} c="#8a919b" />Vložit<Caret /></BigButton>
        <Column $w={18}><ToolItem i="trim" drop /><ToolItem i="doc" drop /><ToolItem i="list" /></Column>
      </PanelBody>
      <PanelLabel>Schránka</PanelLabel>
    </Panel>
  </Ribbon>
);

/* The corridor is plotted in thirds of a pixel from the point (740, 240). */
const L = (x: number) => 740 + x / 3;
const M = (y: number) => 240 + y / 3;
const seg = (a: number, b: number, c: number, d: number) => `M${L(a)} ${M(b)}L${L(c)} ${M(d)}`;
const curve = (pts: [number, number][]) => "M" + pts.map(([x, y]) => `${L(x)} ${M(y)}`).join("L");

const TOP: [number, number][] = [[30, 277], [100, 281], [180, 283], [270, 282], [330, 280], [420, 274], [510, 265], [580, 254], [640, 238], [733, 203]];
const PALE: [number, number][] = [[30, 287], [100, 290], [150, 292], [270, 290], [400, 283], [520, 273], [600, 257], [660, 240], [735, 213]];
const BOT: [number, number][] = [[30, 374], [100, 377], [180, 379], [335, 375], [430, 370], [520, 363], [580, 352], [640, 337], [765, 293]];
const OUT: [number, number][] = BOT.map(([x, y]) => [x, y + 9]);
const OUT2: [number, number][] = BOT.map(([x, y]) => [x, y + 13]);

const at = (pts: [number, number][], x: number) => {
  const i = Math.max(1, pts.findIndex((p) => p[0] >= x));
  const [a, b] = [pts[i - 1], pts[i]];
  return a[1] + ((b[1] - a[1]) * (x - a[0])) / (b[0] - a[0]);
};

const hatches = Array.from({ length: 35 }, (_, k) => {
  const x = 332 + k * 8.800;
  const lean = 3 + k * 0.450 + (k > 20 ? (k - 20) * 0.800 : 0);
  return seg(x, at(TOP, x) - 3, x + lean, at(BOT, x + lean) + 11);
}).join("");

const Marker = ({ x, y, n, label, tx, ty, rot, on }: { x: number; y: number; n: string; label: string; tx: number; ty: number; rot: number; on?: boolean }) => (
  <g stroke={on ? "#d01414" : "#9c1218"} fill={on ? "#d01414" : "#b0141b"}>
    <circle cx={x} cy={y} r="16.500" fill="none" strokeWidth={on ? 1.300 : 0.800} />
    <text x={x} y={y + 5} fontSize="15" textAnchor="middle" stroke="none" transform={`rotate(${rot - 90} ${x} ${y})`}>{n}</text>
    <text fontSize="10" stroke="none" transform={`translate(${tx} ${ty}) rotate(${rot})`}>{label}</text>
  </g>
);

const DrawingView = () => (
  <svg className="drawing" width="1009" height="403" viewBox="0 96 1009 403" fontFamily="DejaVu Sans" fontWeight="200" fill="none">
    <text x="2" y="106" fontSize="6" fontWeight="400" fontFamily="Noto Sans" fill="#cfd3d8">[−][Horní][2D drátový model]</text>
    <path d="M0 239L24 242.500M35.500 244.300h1M48 246L75 250M86.500 251.800h1M99 254L126 258M137.500 259.600h1M150 261.500L162 263.500" stroke="#e00000" strokeWidth="1.300" />
    <g stroke="#b9bdc2" strokeWidth=".8">
      <path d="M10.500 462V488.500H37M8 486h5v5H8zM11 455l2.500 3.500v3M16.500 455l-3 3.500M39 482.500l6 6M45 482.500l-6 6" />
    </g>
    <circle cx="965" cy="153" r="29" stroke="#6b727b" strokeOpacity=".55" strokeWidth="6.500" />
    <Marker x={762.5} y={192} n="8" label="40,00" tx={764} ty={210} rot={93} />
    <Marker x={823.5} y={193} n="9" label="60,00" tx={827} ty={210} rot={88} />
    <Marker x={890.5} y={189} n="10" label="80,00" tx={897} ty={206} rot={83} />
    <Marker x={937} y={175} n="12" label="00,03" tx={946} ty={190} rot={68} on />
    <path d="M762 208.500L759 237M824 209.500L826 238M892 205.500L896.500 234" stroke="#9c1218" />
    <path d="M942 190L951.500 217" stroke="#c81414" strokeWidth="1.300" />
    <path
      d={seg(48, 88, 44, 136) + seg(41, 180, 36, 240) + seg(261, 90, 263, 140) + seg(265, 180, 268, 255) + seg(275, 412, 278, 488) + seg(279, 528, 282, 578) + seg(483, 75, 489, 125) + seg(494, 165, 505, 240) + seg(526, 397, 536, 470) + seg(541, 512, 547, 560) + seg(668, 25, 685, 70) + seg(698, 110, 724, 180) + seg(775, 327, 802, 398)}
      stroke="#9c1218"
    />
    <path d={curve([[30, 335], [180, 336], [330, 332], [460, 325], [570, 309], [660, 287]])} stroke="#5d6268" strokeWidth=".7" />
    <path d={seg(67, 332, 147, 334) + seg(220, 334, 302, 332) + seg(378, 328, 458, 324) + seg(530, 315, 610, 302) + seg(680, 278, 748, 255)} stroke="#e00000" strokeWidth="1.400" />
    <path d={hatches} stroke="#dc2a08" strokeWidth="1.200" />
    <path d={seg(48, 280, 42, 388) + seg(90, 280, 85, 388) + seg(151, 280, 149, 388) + seg(179, 284, 179, 388) + seg(261, 280, 264, 388) + seg(269, 280, 274, 388) + seg(510, 262, 522, 372) + seg(648, 235, 682, 332)} stroke="#e01a08" strokeWidth="1.300" />
    <path d={curve(TOP) + curve(OUT) + curve(OUT2)} stroke="#a80d10" strokeWidth="1" />
    <path d={curve(TOP.map(([x, y]) => [x, y + 5]))} stroke="#8b0d10" strokeWidth=".8" />
    <path d={curve(PALE)} stroke="#e8686c" strokeWidth="1.100" />
    <path d={curve(BOT)} stroke="#f00a0a" strokeWidth="1.300" />
    <path d={curve(TOP.slice(4, 9).map(([x, y]) => [x, y + 3]))} stroke="#f0a09a" strokeWidth="1.500" strokeDasharray=".8 2.200" />
    <path d={curve(BOT.slice(3, 8).map(([x, y]) => [x, y + 3]))} stroke="#c8181a" strokeWidth="3" strokeDasharray="1.200 1.700" />
    <path d={curve(TOP.slice(4, 9))} stroke="#c01010" strokeWidth="3" strokeDasharray="1.200 1.700" />
    <path d={seg(733, 203, 768, 303)} stroke="#f00a0a" strokeWidth="2" />
    <rect x="951" y="139.500" width="27" height="27" fill="#b9bcbf" />
    <rect x="956" y="145" width="17" height="16" fill="#a9afb8" />
    <g fontFamily="Noto Sans" fontWeight="700" textAnchor="middle" fill="#c4c8cc">
      <text x="964.500" y="155.500" fontSize="6" fill="#3d434b" fontFamily="Open Sans">SHORA</text>
      <text x="968.500" y="127" fontSize="9">S</text>
      <text x="935" y="153" fontSize="9">Z</text>
      <text x="994.500" y="161" fontSize="9">V</text>
      <text x="960" y="186" fontSize="9">J</text>
    </g>
    <rect x="953" y="200" width="23" height="9" rx="2" fill="#a6abb3" />
    <text x="955" y="206.500" fontSize="6" fontWeight="400" fontFamily="Noto Sans" fill="#6a4a55">GSS</text>
    <path d="M969.500 203.500l1.500 1.500 1.500-1.500" stroke="#666" strokeWidth=".8" />
    <rect x="990" y="222" width="17" height="110" rx="1" fill="#63676b" />
    <g stroke="#45494e" strokeWidth="1">
      <circle cx="998.500" cy="236.500" r="6" /><circle cx="998.500" cy="236.500" r="3" />
      <path d="M994 258l-1 4 4 4h4l1-8-2 3v-6l-1.500 5-.5-6-1 6-2-5zM993 268l11 10M1003 269l-10 8M998.500 288v12M992.500 294h12M996 290l2.500-3 2.500 3M996 298l2.500 3 2.500-3M993 310h11M993 314h11M993 314v7h9v-7M996 316l3 2-3 2" />
      <circle cx="1002" cy="278" r="2" />
    </g>
    <g stroke="#d7dade" strokeWidth="1.300">
      <path d="M976.500 106.500h5M987.500 104h4v4h-4zM989.500 103v-1h4v4h-1M998 102.500l4.500 4.500M1002.500 102.500l-4.500 4.500" />
    </g>
  </svg>
);

const ExplorerDialog = () => (
  <Dialog $x={160} $y={0} $w={592} $h={375} aria-label="Project Explorer">
    <DialogTitle $h={17} $dim>
      <Logo s={8} />
      <h2>Project Explorer [C3D_model.dwg]</h2>
      <IconButton $w={24}><Icon n="min" s={6} /></IconButton>
      <IconButton $w={21}><Icon n="max" s={8} /></IconButton>
      <IconButton $w={22}><Icon n="close" s={8} /></IconButton>
    </DialogTitle>
    <OuterBody>
      <CountTabs>
        {COUNTS.map(([n, t, w], i) => (
          <CountTab key={i} $w={w} $on={i === COUNTS.length - 1}><Icon n={n} s={7} c="#777" />{t}</CountTab>
        ))}
      </CountTabs>
      <Strip $h={11}>
        <Icon n="treei" /><Icon n="close" s={9} /><Icon n="tablei" /> Spustit všechny
        <Push><Icon n="tablei" s={9} /></Push>
      </Strip>
      <Sheet>
        <colgroup><col width="8" /><col width="51" /><col /></colgroup>
        <thead><SheetRow $h={12}><th colSpan={2}>Název sady objektů</th><th>Objekty</th></SheetRow></thead>
        <tbody><SheetRow $h={9} $sel><td><Icon n="treei" s={7} c="#5a7f9c" /></td><td>Sada objektů - (1)</td><td>&nbsp; &nbsp; 1</td></SheetRow></tbody>
      </Sheet>
      <Blank $h={55} />
      <PageTab $w={50} $h={13}><Icon n="treei" s={7} c="#888" />Objekty (1)</PageTab>
      <Inset $l={2} $r={3}>
        <Strip $h={14} $pad={4}>
          <Icon n="plusfat" c="#b5b5b5" /><Icon n="top" /><Icon n="up" /><Icon n="down" /><Icon n="bottom" /><Icon n="close" s={9} />
        </Strip>
        <Sheet>
          <colgroup><col width="8" /><col width="12" /><col width="43" /><col /></colgroup>
          <thead><SheetRow $h={9}><th colSpan={2}>Index</th><th>Název objektu</th><th>Název</th></SheetRow></thead>
          <tbody><SheetRow $h={9} $sel><td><Icon n="corr" s={7} /></td><td>1</td><td>VPR-SO101-1</td><td>Koridor</td></SheetRow></tbody>
        </Sheet>
        <Blank $h={75} />
        <PageTab $w={90} $h={13}><Icon n="featline" s={7} c="#777" />Návrhové linie koridoru</PageTab>
        <ListRow>
          <Sheet>
            <colgroup><col width="18" /><col width="56" /><col width="54" /><col width="61" /><col width="59" /><col width="62" /><col width="59" /><col width="19" /><col width="19" /><col /></colgroup>
            <thead><SheetRow $h={12}><th colSpan={2}>Název návrhové linie</th><th>Styl</th><th colSpan={7} /></SheetRow></thead>
            <tbody>
              {LINES.map((r, i) => (
                <SheetRow key={i} $h={9} $sel={i === 0}>
                  <td><Inset $l={10} $r={0}><Icon n={i > 6 ? "warn" : "featline"} s={8} c="#777" /></Inset></td>
                  {Array.from({ length: 9 }, (_, k) => (
                    <td key={k} className={k === 8 ? "object" : k > 1 ? "num" : ""}>{r[k]}</td>
                  ))}
                </SheetRow>
              ))}
            </tbody>
          </Sheet>
          <ScrollThumb />
        </ListRow>
      </Inset>
    </OuterBody>
    <Footer $pad="0 7px 6px">
      <PushButton $w={54} disabled>Předvolby...</PushButton>
      <PushButton $w={60} disabled>Rozvržení...</PushButton>
      <PushButton $w={54} disabled>Obnovit...</PushButton>
      <Push><PushButton $w={54} disabled>Nápověda</PushButton></Push>
    </Footer>
    <Highlight $x={62} $y={352} $w={64} $h={22} />
  </Dialog>
);

const LayoutDialog = () => (
  <Dialog $x={248} $y={28} $w={449} $h={305} $front aria-label="Možnosti rozvržení">
    <DialogTitle $h={16}>
      <Logo s={8} />
      <h2>Project Explorer | Možnosti rozvržení</h2>
      <IconButton $w={24} $c="#c5c9c9"><Icon n="min" s={6} /></IconButton>
      <IconButton $w={21}><Icon n="max" s={8} /></IconButton>
      <IconButton $w={22}><Icon n="close" s={8} /></IconButton>
    </DialogTitle>
    <Toolbar>
      <ToolText><Icon n="page" s={9} />Nový</ToolText>
      <ToolText><Icon n="folder" />Otevřít</ToolText>
      <ToolText><Icon n="floppy" />Uložit</ToolText>
    </Toolbar>
    <TypeTabs>
      {TYPES.map((n, i) => <TypeTab key={i} aria-label={n}><Icon n={n} /></TypeTab>)}
    </TypeTabs>
    <Fieldset>
      <legend>Výběr sloupců koridoru</legend>
      <Combo>
        <select aria-label="Rozvržení"><option>Nastavit rozvržení sloupců pro body návrhových linií koridoru</option></select>
        <Svg width="6" height="6" viewBox="0 0 6 6" aria-hidden><path d="M1 2l2 2 2-2" fill="none" stroke="#777" strokeWidth=".8" /></Svg>
      </Combo>
      <GridArea>
        <GridBox>
          <Grid>
            <colgroup><col width="88" /><col width="55" /><col width="94" /><col width="68" /><col width="63" /><col width="53" /></colgroup>
            <thead>
              <tr>
                <th>Popisek sloupce</th><th>Zarovnání popisku</th><th>Zobrazit buňku celkových hodnot</th>
                <th>Režim skupiny sloupců</th><th>Popisek skupiny</th><th>Zarovnání skupiny</th>
              </tr>
            </thead>
            <tbody>
              {GRID_ROWS.map(([t, on, al, mode, ga], i) => (
                <GridRow key={t} $fixed={i === 0}>
                  <td><CheckLabel><Check type="checkbox" defaultChecked={on} />{t}</CheckLabel></td>
                  <td>{al}</td><td /><td>{mode ?? "Neseskupeno"}</td><td /><td>{ga}</td>
                </GridRow>
              ))}
              {[0, 1].map((k) => <GridRow key={k} $empty><td /><td /><td /><td /><td /><td /></GridRow>)}
            </tbody>
          </Grid>
          <HScroll />
        </GridBox>
        <SideStack>
          {["top", "up", "down", "bottom", "checked", "unchecked"].map((n) => (
            <SquareButton key={n} aria-label={n}><Icon n={n} s={7} /></SquareButton>
          ))}
        </SideStack>
      </GridArea>
    </Fieldset>
    <Footer $pad="7px 4px 6px 6px">
      <PushButton $w={63}>Obnovit výchozí</PushButton>
      <Push />
      <PushButton $w={41}>OK</PushButton>
      <PushButton $w={41}>Storno</PushButton>
      <PushButton $w={41}>Nápověda</PushButton>
    </Footer>
    <Highlight $x={74} $y={29} $w={25} $h={16} />
    <Highlight $x={8} $y={51} $w={424} $h={17} />
    <Highlight $x={8} $y={66} $w={95} $h={191} />
  </Dialog>
);

const SIDE = ["peg", "peg", "pencil", "peg", "stack", "globe", "globe", "target", "target", "target", "target", "peg", "fline", "-", "person2", "-", "hookr", "hookr", "hookr", "-", "angle", "star", "slash", "slash", "circ", "fline", "arc", "-", "person2", "stack", "person2"];

const App = () => (
  <Page>
    <Global />
    <TitleBar>
      <IconButton $w={16}><Logo s={12} /></IconButton>
      <Slot $w={5}><Caret /></Slot>
      {["newdoc", "open", "save", "saveas", "mobile", "print", "undo"].map((n) => (
        <IconButton key={n} $w={13} aria-label={n}><Icon n={n} s={9} /></IconButton>
      ))}
      <Slot $w={7}><Caret /></Slot>
      <IconButton $w={12} $c="#6d7480"><Icon n="redo" /></IconButton>
      <Slot $w={7}><Caret /></Slot>
      <DropBox $w={96}><Icon n="gear" /><select aria-label="Pracovní prostor"><option>Civil 3D</option></select><Caret /></DropBox>
      <Slot $w={7}><Caret /></Slot>
      <Slot $w={14}><Icon n="plane" c="#6db3ea" /></Slot>
      <Share href="#share">Sdílet</Share>
      <AppTitle><span>Autodesk Civil 3D 2025</span><span>C3D_model.dwg</span></AppTitle>
      <SearchInput aria-label="Hledat" placeholder="Zadejte klíčové slovo nebo výraz." />
      <IconButton $w={14}><Icon n="search" /></IconButton>
      <Slot $w={12}><Icon n="person" c="#6db3ea" s={9} /></Slot>
      <Slot $w={45}>matej.silhanH...</Slot>
      <Slot $w={7}><Caret /></Slot>
      <IconButton $w={13}><Icon n="cart" /></IconButton>
      <IconButton $w={13}><Icon n="adesk" s={9} /></IconButton>
      <Slot $w={12}><Caret /></Slot>
      <IconButton $w={12}><Icon n="help" s={9} /></IconButton>
      <Slot $w={8}><Caret /></Slot>
      <Slot $w={31} />
      <IconButton $w={25}><Icon n="min" /></IconButton>
      <IconButton $w={23}><Icon n="restore" s={7} /></IconButton>
      <IconButton $w={26}><Icon n="close" /></IconButton>
    </TitleBar>
    <RibbonTabs>
      {RIBBON_TABS.map(([t, w, k]) => <RibbonTab key={t} $w={w} $kind={k}>{t}</RibbonTab>)}
      <Slot $w={35}><Icon n="rect" s={7} /><Caret /></Slot>
    </RibbonTabs>
    <RibbonPanels />
    <FileTabs>
      <Icon n="burger" s={9} />
      <Slot $w={14}>/</Slot>
      <FileTab $w={20}>Začít</FileTab>
      <ActiveFile>C3D_model*<Icon n="close" s={6} c="#9aa1ab" /></ActiveFile>
      <Slot $w={18}><Icon n="plus" s={7} /></Slot>
      /
    </FileTabs>
    <Workspace>
      <Canvas><DrawingView /></Canvas>
      <SideBar>
        {SIDE.map((n, i) => (n === "-" ? <SideRule key={i} /> : <SideButton key={i} aria-label={n}><Icon n={n} s={8} /></SideButton>))}
      </SideBar>
      <ExplorerDialog />
      <LayoutDialog />
    </Workspace>
    <CommandPanel>
      <CommandTools><Icon n="close" s={6} /><Icon n="wrenchf" s={8} /></CommandTools>
      <CommandMain>
        <CommandLog>
          <span>Příkaz: Aktualizuji značky bloku *Model_Space</span>
          <span>Hotovo.</span>
          <span>**** Nebyla změněna žádná systémová proměnná. ****</span>
        </CommandLog>
        <CommandInput><Icon n="console" s={9} /><Icon n="caret" s={4} /><input aria-label="Příkaz" placeholder="Zadejte příkaz" /></CommandInput>
      </CommandMain>
    </CommandPanel>
    <StatusBar>
      <Group>
        <Slot $w={12}><Icon n="burger" s={9} /></Slot>
        <Slot $w={4} />
        <ModelTab>Model</ModelTab>
        <FileTab $w={20}>A4v</FileTab>/
        <FileTab $w={20}>A4š</FileTab>/
        <FileTab $w={20}>A3</FileTab>/
        <Slot $w={18}><Icon n="plus" s={8} /></Slot>/
      </Group>
      <StatusRight>
        <StatusItem $w={98}>-822144.6602, -1.0702E+06, 0.0000</StatusItem>
        <StatusItem $w={34}>MODELP</StatusItem>
        {MODES.map((n, i) => (
          <StatusItem key={i} $w={n === "caret" ? 9 : 14} $on={MODES_ON.includes(i)}><Icon n={n} s={n === "caret" ? 4 : 8} /></StatusItem>
        ))}
        <StatusItem $w={52}>1:1000 / 100%<Caret /></StatusItem>
        <StatusItem $w={13}><Icon n="gear" /></StatusItem>
        <StatusItem $w={9}><Caret /></StatusItem>
        <StatusItem $w={13} $on><Icon n="plus" s={9} /></StatusItem>
        <StatusItem $w={15}><Icon n="doc" /></StatusItem>
        <StatusItem $w={39}>Desetinné<Caret /></StatusItem>
        <StatusItem $w={13}><Icon n="list" /></StatusItem>
        <StatusItem $w={23}><Icon n="shape" /><Caret /></StatusItem>
        <StatusItem $w={13}><Icon n="array" /></StatusItem>
        <StatusItem $w={13} $on><Icon n="circ" s={9} /></StatusItem>
        <StatusItem $w={15}><Icon n="globe" /></StatusItem>
        <StatusItem $w={25}>1.4000</StatusItem>
        <StatusItem $w={23}><Icon n="target" /><Caret /></StatusItem>
        <StatusItem $w={13} $on><Icon n="eraser" /></StatusItem>
        <StatusItem $w={15}><Icon n="align" /></StatusItem>
        <StatusItem $w={15}><Icon n="lock" /></StatusItem>
        <StatusItem $w={15}><Icon n="max" /></StatusItem>
        <StatusItem $w={15}><Icon n="burger" /></StatusItem>
      </StatusRight>
    </StatusBar>
  </Page>
);

export default App;
